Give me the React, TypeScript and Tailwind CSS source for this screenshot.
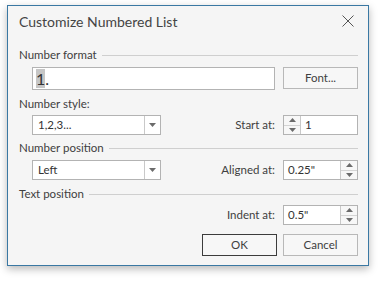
import React from "react";

const font = { fontFamily: 'Lato, "Open Sans", sans-serif' };

const DropArrow: React.FC = () => (
    <svg width="7" height="4" viewBox="0 0 7 4">
        <path d="M0 0h7L3.5 4z" fill="#6b6b6b" />
    </svg>
);

const SpinButtons: React.FC<{ side: "left" | "right" }> = ({ side }) => (
    <div
        className={`flex flex-col w-[17px] h-full ${side === "left" ? "border-r" : "border-l"} border-[#c9c9c9] bg-[#f7f7f7]`}
    >
        <div className="flex-1 flex items-center justify-center border-b border-[#d4d4d4]">
            <svg width="7" height="4" viewBox="0 0 7 4">
                <path d="M0 4h7L3.5 0z" fill="#6b6b6b" />
            </svg>
        </div>
        <div className="flex-1 flex items-center justify-center">
            <DropArrow />
        </div>
    </div>
);

const GroupHeader: React.FC<{ label: string }> = ({ label }) => (
    <div className="flex items-center h-[16px] gap-[5px]">
        <span className="text-[11.5px] text-[#404040] whitespace-nowrap">{label}</span>
        <div className="flex-1 h-px bg-[#cfcfcf]" />
    </div>
);

const Combo: React.FC<{ value: string }> = ({ value }) => (
    <div className="ml-[13px] w-[129px] h-[20px] flex border border-[#b3b3b3] bg-white">
        <span className="flex-1 pl-[5px] text-[11.5px] leading-[18px] text-[#333]">{value}</span>
        <div className="w-[16px] border-l border-[#c9c9c9] flex items-center justify-center">
            <DropArrow />
        </div>
    </div>
);

const SpinRow: React.FC<{ label: string; value: string; side: "left" | "right" }> = ({ label, value, side }) => (
    <div className="flex items-center gap-[8px]">
        <span className="text-[11.5px] text-[#404040]">{label}</span>
        <div className="w-[75px] h-[20px] flex border border-[#b3b3b3] bg-white">
            {side === "left" && <SpinButtons side="left" />}
            <span className="flex-1 pl-[4px] text-[11.5px] leading-[18px] text-[#333]">{value}</span>
            {side === "right" && <SpinButtons side="right" />}
        </div>
    </div>
);

const Button: React.FC<{ label: string; strong?: boolean }> = ({ label, strong }) => (
    <div
        className={`w-[75px] h-[22px] flex items-center justify-center text-[11.5px] text-[#404040] bg-[#f7f7f7] border ${strong ? "border-[#3c3c3c]" : "border-[#b8b8b8]"}`}
    >
        {label}
    </div>
);

export default function App() {
    return (
        <div className="w-[382px] h-[282px] bg-white pl-[7px] pt-[5px]" style={font}>
            <div className="w-[362px] h-[261px] border border-[#3a78a3] bg-[#f5f5f5] shadow-[0_3px_8px_rgba(0,0,0,0.28)] flex flex-col">
                <div className="h-[30px] flex items-center justify-between pl-[11px] pr-[14px]">
                    <span className="text-[14px] text-[#444]">Customize Numbered List</span>
                    <svg width="12" height="12" viewBox="0 0 12 12">
                        <path d="M0.5 0.5l11 11M11.5 0.5l-11 11" stroke="#555" strokeWidth="1" />
                    </svg>
                </div>
                <div className="flex flex-col pl-[11px] pr-[10px] pt-[11px]">
                    <GroupHeader label="Number format" />
                    <div className="mt-[4px] flex gap-[8px]">
                        <div className="ml-[13px] w-[243px] h-[23px] border border-[#b3b3b3] bg-white flex items-center pl-[3px]">
                            <span className="text-[16px] leading-[19px] text-[#333]">
                                <span className="bg-[#c6c6c6]">1</span>.
                            </span>
                        </div>
                        <Button label="Font..." />
                    </div>
                    <div className="mt-[6px] h-[16px] flex items-center text-[11.5px] text-[#404040]">Number style:</div>
                    <div className="mt-[3px] flex justify-between">
                        <Combo value="1,2,3..." />
                        <SpinRow label="Start at:" value="1" side="left" />
                    </div>
                    <div className="mt-[5px]">
                        <GroupHeader label="Number position" />
                    </div>
                    <div className="mt-[4px] flex justify-between">
                        <Combo value="Left" />
                        <SpinRow label="Aligned at:" value={'0.25"'} side="right" />
                    </div>
                    <div className="mt-[6px]">
                        <GroupHeader label="Text position" />
                    </div>
                    <div className="mt-[3px] flex justify-end">
                        <SpinRow label="Indent at:" value={'0.5"'} side="right" />
                    </div>
                    <div className="mt-[9px] flex justify-end gap-[6px]">
                        <Button label="OK" strong />
                        <Button label="Cancel" />
                    </div>
                </div>
            </div>
        </div>
    );
}
